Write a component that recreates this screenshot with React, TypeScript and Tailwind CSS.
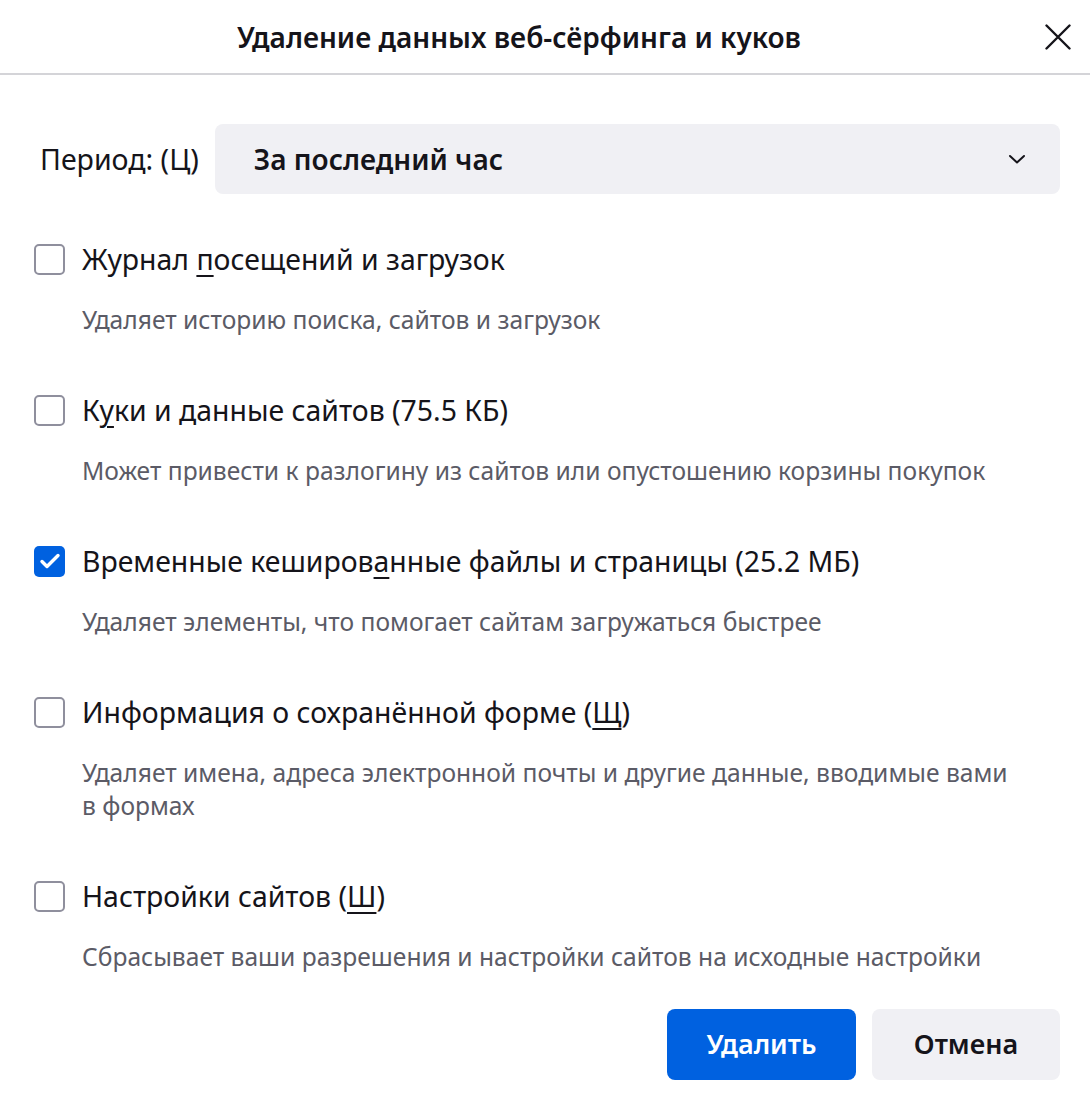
import { useState } from "react";

type Item = {
  id: string;
  before: string;
  key: string;
  after: string;
  desc: string;
  checked: boolean;
};

const items: Item[] = [
  {
    id: "history",
    before: "Журнал ",
    key: "п",
    after: "осещений и загрузок",
    desc: "Удаляет историю поиска, сайтов и загрузок",
    checked: false,
  },
  {
    id: "cookies",
    before: "К",
    key: "у",
    after: "ки и данные сайтов (75.5 КБ)",
    desc: "Может привести к разлогину из сайтов или опустошению корзины покупок",
    checked: false,
  },
  {
    id: "cache",
    before: "Временные кеширов",
    key: "а",
    after: "нные файлы и страницы (25.2 МБ)",
    desc: "Удаляет элементы, что помогает сайтам загружаться быстрее",
    checked: true,
  },
  {
    id: "forms",
    before: "Информация о сохранённой форме (",
    key: "Щ",
    after: ")",
    desc: "Удаляет имена, адреса электронной почты и другие данные, вводимые вами в формах",
    checked: false,
  },
  {
    id: "settings",
    before: "Настройки сайтов (",
    key: "Ш",
    after: ")",
    desc: "Сбрасывает ваши разрешения и настройки сайтов на исходные настройки",
    checked: false,
  },
];

function Check({ on, onClick }: { on: boolean; onClick: () => void }) {
  return (
    <button
      onClick={onClick}
      className={
        on
          ? "flex h-[31px] w-[31px] shrink-0 items-center justify-center rounded-[5px] bg-[#0061e0]"
          : "flex h-[31px] w-[31px] shrink-0 items-center justify-center rounded-[5px] border-2 border-[#8f8f9d] bg-white"
      }
    >
      {on && (
        <svg width="24" height="24" viewBox="0 0 24 24" fill="none">
          <path d="M4 12.5l5 5L20 6.5" stroke="white" strokeWidth="3.4" strokeLinecap="round" strokeLinejoin="round" />
        </svg>
      )}
    </button>
  );
}

export default function App() {
  const [state, setState] = useState<Record<string, boolean>>(
    Object.fromEntries(items.map((i) => [i.id, i.checked]))
  );

  return (
    <div className="flex h-[1107px] w-full flex-col bg-white text-[#15141a] font-['Noto_Sans','Open_Sans',sans-serif]">
      {/* Header */}
      <div className="flex h-[75px] shrink-0 items-center border-b-2 border-[#d4d4d8]">
        <div className="flex-1 text-center text-[28px] font-semibold">Удаление данных веб-сёрфинга и куков</div>
        <button className="mr-[12px] flex h-[40px] w-[40px] items-center justify-center">
          <svg width="26" height="26" viewBox="0 0 26 26" fill="none">
            <path d="M1.5 1.5l23 23M24.5 1.5l-23 23" stroke="#15141a" strokeWidth="2.4" strokeLinecap="round" />
          </svg>
        </button>
      </div>

      {/* Period */}
      <div className="mt-[49px] flex items-center pl-[40px] pr-[30px]">
        <span className="text-[28.5px]">Период: (Ц)</span>
        <div className="ml-[16px] flex h-[70px] flex-1 items-center justify-between rounded-[8px] bg-[#f0f0f4] pl-[39px] pr-[34px]">
          <span className="text-[28px] font-semibold">За последний час</span>
          <svg width="18" height="12" viewBox="0 0 18 12" fill="none">
            <path d="M2 3l7 6.5L16 3" stroke="#15141a" strokeWidth="2" strokeLinecap="round" strokeLinejoin="round" />
          </svg>
        </div>
      </div>

      {/* Options */}
      <div className="mt-[45px] flex flex-col gap-[54px] pl-[34px] pr-[30px]">
        {items.map((it) => (
          <div key={it.id} className="flex flex-col gap-[24px]">
            <label className="flex items-center gap-[17px]">
              <Check on={state[it.id]} onClick={() => setState((s) => ({ ...s, [it.id]: !s[it.id] }))} />
              <span className="text-[28.4px] leading-[40px]">
                {it.before}
                <span className="underline underline-offset-[5px] decoration-[2px]">{it.key}</span>
                {it.after}
              </span>
            </label>
            <p className="pl-[48px] pr-[50px] text-[24.6px] leading-[33px] text-[#5b5b66]">{it.desc}</p>
          </div>
        ))}
      </div>

      {/* Buttons */}
      <div className="mt-[36px] flex justify-end gap-[16px] pr-[30px]">
        <button className="h-[71px] w-[189px] rounded-[8px] bg-[#0061e0] text-[27px] font-semibold text-white">Удалить</button>
        <button className="h-[71px] w-[188px] rounded-[8px] bg-[#f0f0f4] text-[27px] font-semibold text-[#15141a]">Отмена</button>
      </div>
    </div>
  );
}
